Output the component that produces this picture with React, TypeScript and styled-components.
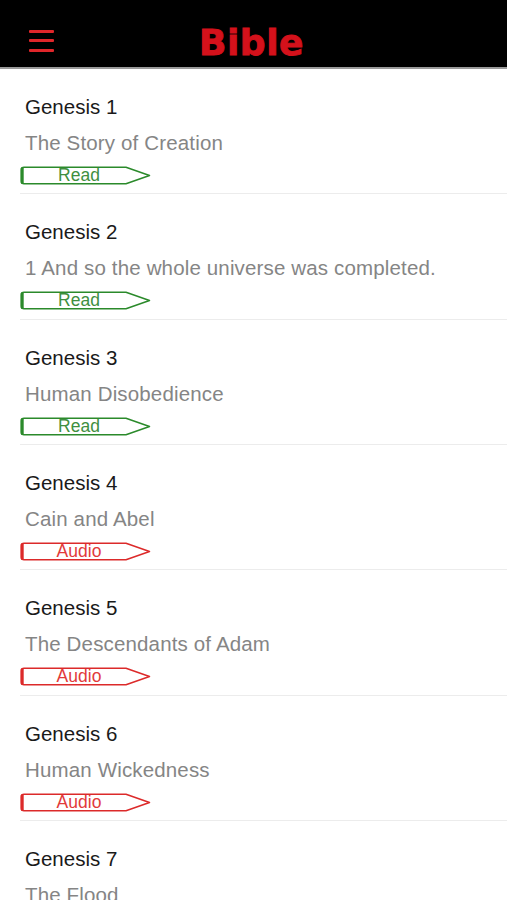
import React from "react";
import styled, { createGlobalStyle } from "styled-components";

const Global = createGlobalStyle`
  html, body { margin: 0; padding: 0; background: #fff; }
  body { font-family: "Liberation Sans", Arial, sans-serif; overflow: hidden; }
  * { box-sizing: border-box; }
`;

const Page = styled.div`
  width: 507px;
  height: 900px;
  overflow: hidden;
  background: #fff;
`;

const Header = styled.header`
  height: 69px;
  padding-top: 14px;
  background: #000;
  border-bottom: 2px solid #9a9a9a;
  display: grid;
  grid-template-columns: 1fr auto 1fr;
  align-items: center;
`;

const Burger = styled.div`
  display: flex;
  flex-direction: column;
  gap: 6.5px;
  width: 25px;
  margin-left: 29px;
  span {
    display: block;
    height: 3px;
    background: #e0262a;
    border-radius: 1px;
  }
`;

const Title = styled.h1`
  margin: 0;
  font-family: "DejaVu Sans", Verdana, sans-serif;
  font-weight: 700;
  font-size: 36px;
  color: #d4111b;
  -webkit-text-stroke: 0.9px #d4111b;
  line-height: 1;
  letter-spacing: 0.5px;
  transform: translate(-2px, 2px);
`;

const List = styled.ul`
  list-style: none;
  margin: 0;
  padding: 0;
`;

const Item = styled.li`
  height: 125.33px;
  margin-left: 20px;
  padding-top: 26px;
  border-bottom: 1px solid #ececec;
  display: flex;
  flex-direction: column;
  align-items: flex-start;
`;

const ChapterName = styled.div`
  padding-left: 5px;
  font-size: 20.5px;
  line-height: 24px;
  color: #1a1a1a;
`;

const Summary = styled.div`
  padding-left: 5px;
  margin-top: 12px;
  font-size: 20.5px;
  line-height: 24px;
  letter-spacing: 0.15px;
  color: #858585;
  white-space: nowrap;
`;

const Tag = styled.div<{ $color: string }>`
  position: relative;
  margin-top: 11px;
  width: 131px;
  height: 19px;
  display: flex;
  align-items: center;
  color: ${(p) => p.$color};
  svg {
    position: absolute;
    inset: 0;
  }
`;

const TagLabel = styled.span`
  position: relative;
  width: 118px;
  text-align: center;
  font-size: 17.5px;
  line-height: 19px;
`;

const TagShape: React.FC<{ color: string }> = ({ color }) => (
  <svg width="131" height="19" viewBox="0 0 131 19" fill="none">
    <path
      d="M4 1.2 H106 L129.5 9.5 L106 17.8 H4 Q1.3 17.8 1.3 15 V4 Q1.3 1.2 4 1.2 Z"
      stroke={color}
      strokeWidth="1.5"
      strokeLinejoin="round"
    />
    <path d="M2.2 2.5 V16.5" stroke={color} strokeWidth="3" strokeLinecap="round" />
  </svg>
);

type Chapter = { name: string; summary: string; kind: "Read" | "Audio" };

const chapters: Chapter[] = [
  { name: "Genesis 1", summary: "The Story of Creation", kind: "Read" },
  { name: "Genesis 2", summary: "1 And so the whole universe was completed.", kind: "Read" },
  { name: "Genesis 3", summary: "Human Disobedience", kind: "Read" },
  { name: "Genesis 4", summary: "Cain and Abel", kind: "Audio" },
  { name: "Genesis 5", summary: "The Descendants of Adam", kind: "Audio" },
  { name: "Genesis 6", summary: "Human Wickedness", kind: "Audio" },
  { name: "Genesis 7", summary: "The Flood", kind: "Audio" },
];

const colors = {
  Read: { stroke: "#2b8a2b", text: "#3f8f3f" },
  Audio: { stroke: "#dc2a2a", text: "#e23a3a" },
};

export default function App() {
  return (
    <Page>
      <Global />
      <Header>
        <Burger>
          <span />
          <span />
          <span />
        </Burger>
        <Title>Bible</Title>
        <div />
      </Header>
      <List>
        {chapters.map((c) => (
          <Item key={c.name}>
            <ChapterName>{c.name}</ChapterName>
            <Summary>{c.summary}</Summary>
            <Tag $color={colors[c.kind].text}>
              <TagShape color={colors[c.kind].stroke} />
              <TagLabel>{c.kind}</TagLabel>
            </Tag>
          </Item>
        ))}
      </List>
    </Page>
  );
}
